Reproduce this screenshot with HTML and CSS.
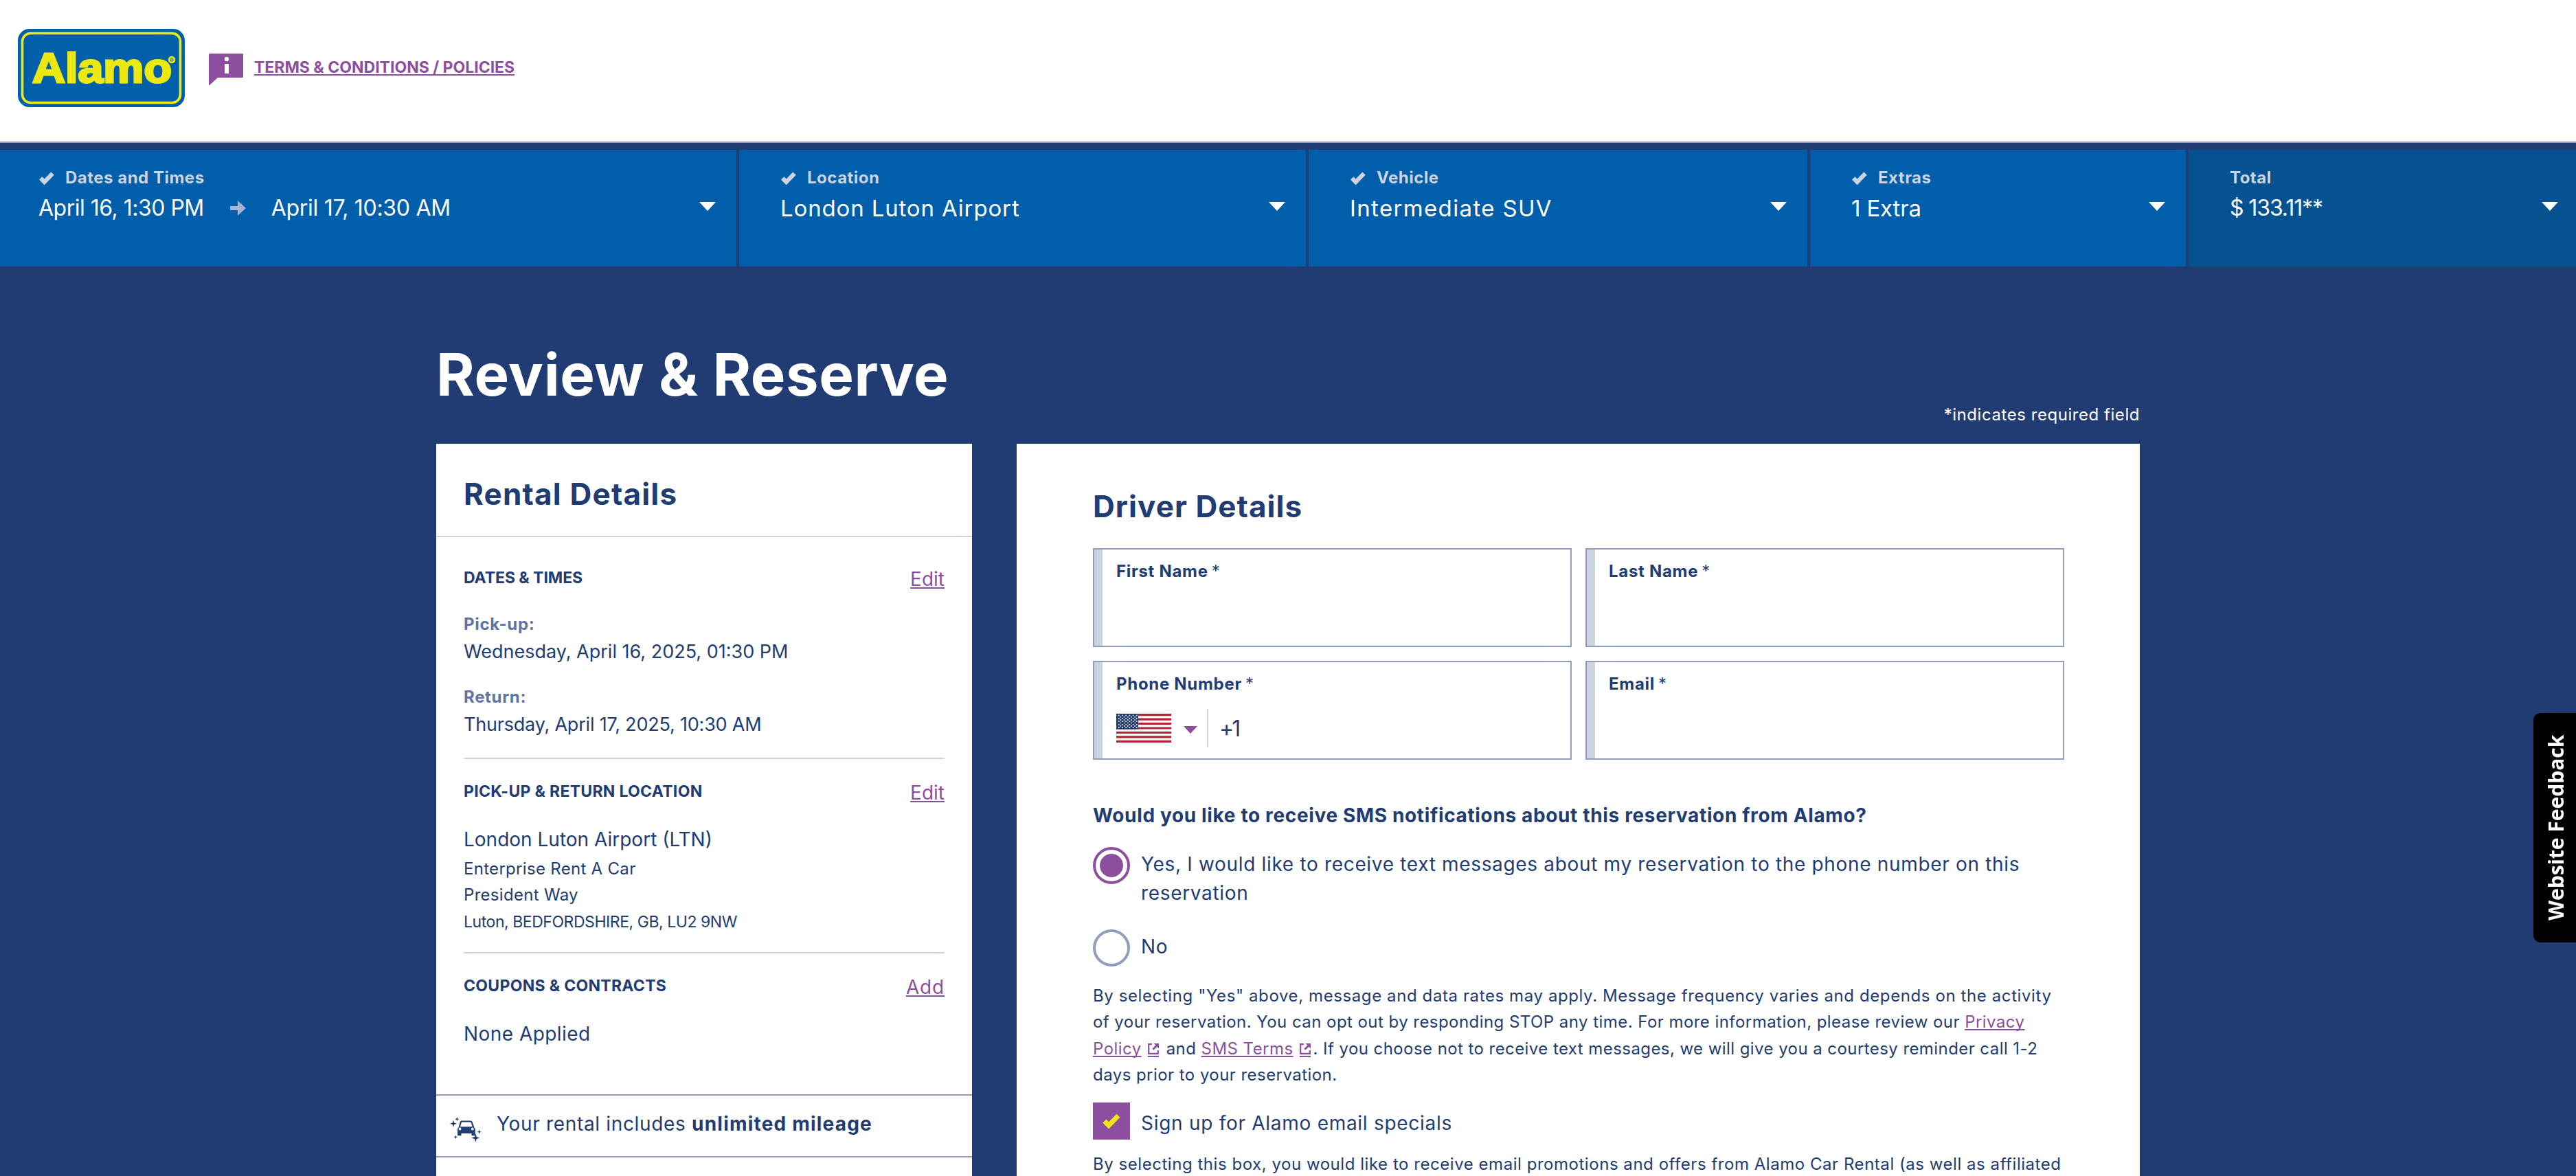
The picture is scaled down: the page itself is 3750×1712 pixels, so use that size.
FILE: index.html
```
<!DOCTYPE html>
<html lang="en">
<head>
    <meta charset="UTF-8">
    <meta name="viewport" content="width=device-width, initial-scale=1.0">
    <title>Review &amp; Reserve</title>
    <link rel="stylesheet" href="styles.css">
</head>
<body>
    <!-- Shared icons -->
    <svg class="defs" width="0" height="0">
        <symbol id="check" viewBox="0 0 24 20"><path d="M3.2 10.4l5.4 5.6L20.6 3.6" fill="none" stroke="currentColor" stroke-width="6.2" stroke-linejoin="miter"/></symbol>
        <symbol id="caret" viewBox="0 0 24 13"><path d="M0 0h24L12 13z" fill="currentColor"/></symbol>
        <symbol id="external" viewBox="0 0 16 16"><path d="M6 1.2H1.2v13.6h13.6V10" fill="none" stroke="currentColor" stroke-width="2.2"/><path d="M8.5 0H16v7.5l-2.7-2.7-5 5-2-2 5-5z" fill="currentColor"/></symbol>
    </svg>

    <header class="header">
        <svg class="logo" viewBox="0 0 243 114">
            <rect width="243" height="114" rx="17" fill="#0160a9"/>
            <rect x="6.5" y="6.5" width="230" height="101" rx="12" fill="none" stroke="#ece814" stroke-width="3.6"/>
            <text class="logo-text" x="21" y="78" textLength="203" lengthAdjust="spacingAndGlyphs">Alamo</text>
            <circle cx="224" cy="45" r="4" fill="#7ba45c" stroke="#ece814" stroke-width="2.5"/>
        </svg>
        <svg class="info-icon" viewBox="0 0 50 46">
            <path d="M1 0h48l1 1v33l-1 1H13L1 46H0V1z" fill="#8c4f9f"/>
            <circle cx="26" cy="8" r="3.2" fill="#fff"/>
            <rect x="23" y="15" width="6" height="14" fill="#fff"/>
        </svg>
        <a class="terms" href="#">TERMS &amp; CONDITIONS / POLICIES</a>
    </header>

    <!-- Reservation progress bar -->
    <nav class="steps">
        <div class="step step-dates">
            <div class="step-label"><svg class="check"><use href="#check"/></svg>Dates and Times</div>
            <div class="step-value">
                <span class="date-from">April 16, 1:30 PM</span>
                <svg class="arrow" viewBox="0 0 23 22"><path d="M0 8h11V0l12 11-12 11v-8H0z" fill="#a5b5d6"/></svg>
                <span class="date-to">April 17, 10:30 AM</span>
                <svg class="caret"><use href="#caret"/></svg>
            </div>
        </div>
        <div class="step step-location">
            <div class="step-label"><svg class="check"><use href="#check"/></svg>Location</div>
            <div class="step-value">London Luton Airport<svg class="caret"><use href="#caret"/></svg></div>
        </div>
        <div class="step step-vehicle">
            <div class="step-label"><svg class="check"><use href="#check"/></svg>Vehicle</div>
            <div class="step-value">Intermediate SUV<svg class="caret"><use href="#caret"/></svg></div>
        </div>
        <div class="step step-extras">
            <div class="step-label"><svg class="check"><use href="#check"/></svg>Extras</div>
            <div class="step-value">1 Extra<svg class="caret"><use href="#caret"/></svg></div>
        </div>
        <div class="step step-total">
            <div class="step-label">Total</div>
            <div class="step-value">$ 133.11**<svg class="caret"><use href="#caret"/></svg></div>
        </div>
    </nav>

    <main class="container">
        <div class="page-head">
            <h1>Review &amp; Reserve</h1>
            <p class="required-note">*indicates required field</p>
        </div>

        <div class="columns">
            <aside class="rental">
                <h2>Rental Details</h2>

                <section class="rental-section dates">
                    <div class="section-head">
                        <h3>DATES &amp; TIMES</h3>
                        <a href="#">Edit</a>
                    </div>
                    <p class="sub-label">Pick-up:</p>
                    <p class="date">Wednesday, April 16, 2025, 01:30 PM</p>
                    <p class="sub-label">Return:</p>
                    <p class="date date-return">Thursday, April 17, 2025, 10:30 AM</p>
                </section>

                <section class="rental-section location">
                    <div class="section-head">
                        <h3 class="wide">PICK-UP &amp; RETURN LOCATION</h3>
                        <a href="#">Edit</a>
                    </div>
                    <p class="place">London Luton Airport (LTN)</p>
                    <address>
                        <span>Enterprise Rent A Car</span><br>
                        <span>President Way</span><br>
                        <span class="city">Luton, BEDFORDSHIRE, GB, LU2 9NW</span>
                    </address>
                </section>

                <section class="rental-section coupons">
                    <div class="section-head">
                        <h3 class="wide">COUPONS &amp; CONTRACTS</h3>
                        <a class="add" href="#">Add</a>
                    </div>
                    <p class="none">None Applied</p>
                </section>

                <div class="mileage">
                    <svg class="car" viewBox="0 0 46 36" fill="#213c72">
                        <path d="M16.5 5.5h13.5q2 0 2.6 1.8l2.8 8.2q1.4.8 1.4 2.5v8.5q0 .8-.8.8h-3.6q-.9 0-.9-.9V24H16.5v2.4q0 .9-.9.9H12q-.9 0-.9-.9V18q0-1.7 1.4-2.5l2.2-8.2q.5-1.8 1.8-1.8zM17 7.5L15 14.3h17.6L30.4 7.5z" fill-rule="evenodd"/>
                        <circle cx="14.5" cy="17.5" r="1.9" fill="#fff"/>
                        <circle cx="32.8" cy="17.5" r="1.9" fill="#fff"/>
                        <path d="M5 4.5l1.2 4L10.2 9.700l-4 1.200L5 15l-1.200-4.100L-.2 9.700l4-1.200z"/>
                        <path d="M10.3 0l.8 2.4 2.4.8-2.4.8-.8 2.400-.8-2.400-2.400-.8 2.400-.8z"/>
                        <path d="M8.3 26.4l.7 2.200 2.200.7-2.200.7-.7 2.200-.7-2.200-2.200-.7 2.200-.7z"/>
                        <path d="M42.7 18.4l.8 2.500 2.500.8-2.500.8-.8 2.500-.8-2.500-2.500-.8 2.500-.8z"/>
                        <path d="M37.3 24.2l1.500 4.700 4.700 1.500-4.700 1.500-1.500 4.500-1.500-4.500-4.700-1.500 4.700-1.500z"/>
                    </svg>
                    <p>Your rental includes <strong>unlimited mileage</strong></p>
                </div>
            </aside>

            <form class="driver">
                <h2>Driver Details</h2>

                <div class="fields">
                    <div class="field">
                        <label for="firstName">First Name<span>*</span></label>
                        <input type="text" id="firstName">
                    </div>
                    <div class="field">
                        <label for="lastName">Last Name<span>*</span></label>
                        <input type="text" id="lastName">
                    </div>
                    <div class="field">
                        <label for="phone">Phone Number<span>*</span></label>
                        <div class="phone">
                            <svg class="flag" viewBox="0 0 80 42">
                                <rect width="80" height="42" fill="#fff"/>
                                <path d="M0 1.6h80M0 8.1h80M0 14.5h80M0 21h80M0 27.5h80M0 33.9h80M0 40.4h80" stroke="#b52233" stroke-width="3.2"/>
                                <rect width="32" height="22.6" fill="#213c72"/>
                                <path d="M3 2.5h28M3 6.9h28M3 11.3h28M3 15.7h28M3 20.1h28" stroke="#fff" stroke-width="1.6" stroke-dasharray="1.6 3.6"/>
                                <path d="M5.6 4.7h24M5.6 9.1h24M5.6 13.5h24M5.6 17.9h24" stroke="#fff" stroke-width="1.6" stroke-dasharray="1.6 3.6"/>
                            </svg>
                            <svg class="phone-caret"><use href="#caret"/></svg>
                            <input type="tel" id="phone" value="+1">
                        </div>
                    </div>
                    <div class="field">
                        <label for="email">Email<span>*</span></label>
                        <input type="email" id="email">
                    </div>
                </div>

                <h4>Would you like to receive SMS notifications about this reservation from Alamo?</h4>

                <div class="option">
                    <span class="radio checked"></span>
                    <p>Yes, I would like to receive text messages about my reservation to the phone number on this<br>reservation</p>
                </div>
                <div class="option option-no">
                    <span class="radio"></span>
                    <p>No</p>
                </div>

                <p class="legal">
                    <span class="first-line">By selecting "Yes" above, message and data rates may apply. Message frequency varies and depends on the activity</span><br>
                    of your reservation. You can opt out by responding STOP any time. For more information, please review our <a href="#">Privacy</a><br>
                    <a href="#">Policy</a><svg class="external"><use href="#external"/></svg><span class="and">and</span> <a href="#">SMS Terms</a><svg class="external"><use href="#external"/></svg><span class="rest">. If you choose not to receive text messages, we will give you a courtesy reminder call 1-2</span><br>
                    days prior to your reservation.
                </p>

                <div class="option option-email">
                    <span class="checkbox"><svg class="tick"><use href="#check"/></svg></span>
                    <p>Sign up for Alamo email specials</p>
                </div>
                <p class="legal legal-email">By selecting this box, you would like to receive email promotions and offers from Alamo Car Rental (as well as affiliated</p>
            </form>
        </div>
    </main>

    <button class="feedback" type="button">Website Feedback</button>
</body>
</html>
```
FILE: styles.css
```
* {
    box-sizing: border-box;
}

body {
    margin: 0;
    height: 1712px;
    overflow: hidden;
    background-color: #213c72;
    color: #213c72;
    font-family: Inter, "Open Sans", sans-serif;
    font-size: 28px;
    line-height: 42px;
    letter-spacing: 0.67px;
    white-space: nowrap;
}

h1, h2, h3, h4, p {
    margin: 0;
}

svg {
    display: block;
    flex-shrink: 0;
}

.defs {
    position: absolute;
}

a {
    color: #8c4f9f;
    text-decoration: underline;
    text-decoration-thickness: 2px;
    text-underline-offset: 2px;
    text-decoration-skip-ink: none;
}

/* Header */
.header {
    display: flex;
    align-items: flex-start;
    height: 208px;
    padding-left: 26px;
    background-color: #fff;
    border-bottom: 2px solid #929dbb;
}

.logo {
    width: 243px;
    height: 114px;
    margin-top: 42px;
}

.logo-text {
    font-family: "Liberation Sans", Arial, sans-serif;
    font-size: 62px;
    font-weight: bold;
    letter-spacing: 0;
    fill: #ece814;
    stroke: #ece814;
    stroke-width: 3px;
}

.info-icon {
    width: 50px;
    height: 46px;
    margin: 78px 16px 0 35px;
}

.terms {
    margin-top: 80px;
    font-size: 23px;
    font-weight: 700;
    line-height: 36px;
    letter-spacing: 0;
}

/* Steps bar */
.steps {
    display: flex;
    gap: 4px;
    height: 170px;
    margin-top: 10px;
}

.step {
    padding: 23px 30px 0 60px;
    background-color: #005eaa;
    color: #fff;
}

.step-dates {
    width: 1072px;
    padding-left: 56px;
}

.step-location {
    width: 825px;
}

.step-vehicle {
    width: 726px;
}

.step-extras {
    width: 547px;
}

.step-total {
    flex: 1;
    padding-right: 26px;
    background-color: #065290;
}

.step-label {
    display: flex;
    align-items: center;
    height: 36px;
    color: #ccd4e2;
    font-size: 24px;
    font-weight: 700;
    letter-spacing: 0.5px;
}

.check {
    width: 24px;
    height: 20px;
    margin-right: 15px;
}

.step-value {
    display: flex;
    align-items: center;
    height: 48px;
    margin-top: 2px;
    font-size: 33px;
    letter-spacing: 0.85px;
}

.caret {
    width: 24px;
    height: 13px;
    margin: -6px 0 0 auto;
}

.arrow {
    width: 23px;
    height: 22px;
    margin: 0 37px 0 38px;
}

.date-from {
    font-size: 32px;
    letter-spacing: -0.5px;
}

.date-to {
    font-size: 32px;
    letter-spacing: -0.3px;
}

.step-vehicle .step-value {
    letter-spacing: 1.35px;
}

.step-extras .step-value {
    letter-spacing: -0.15px;
}

.step-total .step-value {
    font-size: 32px;
    letter-spacing: -1.1px;
}

/* Page */
.container {
    width: 2480px;
    margin: 108px auto 0;
}

.page-head {
    display: flex;
    justify-content: space-between;
    height: 150px;
}

h1 {
    color: #fff;
    font-size: 85px;
    line-height: 100px;
    letter-spacing: 0.6px;
}

.required-note {
    align-self: flex-end;
    margin-bottom: 23px;
    color: #fff;
    font-size: 24px;
    line-height: 38px;
    letter-spacing: 0.55px;
}

.columns {
    display: flex;
    gap: 65px;
    height: 1066px;
    overflow: hidden;
}

/* Rental details */
.rental {
    width: 780px;
    background-color: #fff;
}

.rental h2 {
    height: 136px;
    padding: 43px 40px 0;
    border-bottom: 2px solid #ccd4e2;
    font-size: 44px;
    line-height: 60px;
    letter-spacing: 1.2px;
}

.rental-section {
    margin: 0 40px;
    padding: 28px 0;
    border-bottom: 2px solid #ccd4e2;
}

.dates {
    padding: 40px 0 27px;
}

.location {
    padding-bottom: 25px;
}

.coupons {
    padding-bottom: 67px;
    border-bottom: none;
}

.section-head {
    display: flex;
    justify-content: space-between;
    align-items: flex-start;
    margin-bottom: 26px;
}

.section-head a {
    letter-spacing: 0;
}

.section-head .add {
    letter-spacing: 0.8px;
}

h3 {
    margin-top: 1px;
    font-size: 23px;
    line-height: 36px;
    letter-spacing: -0.05px;
}

h3.wide {
    letter-spacing: 0.3px;
}

.sub-label {
    color: #5f74a0;
    font-size: 24px;
    font-weight: 700;
    line-height: 38px;
}

.date {
    margin-bottom: 26px;
    font-size: 27px;
    letter-spacing: 0;
}

.date-return {
    margin-bottom: 0;
    letter-spacing: -0.2px;
}

.place {
    margin-bottom: 3px;
    letter-spacing: 0;
}

address {
    font-size: 24px;
    font-style: normal;
    line-height: 38.4px;
    letter-spacing: 0.3px;
}

address .city {
    font-size: 23px;
    letter-spacing: -0.45px;
}

.none {
    letter-spacing: 0.45px;
}

.mileage {
    display: flex;
    height: 92px;
    padding: 20px 20px 0;
    border-top: 2px solid #929dbb;
    border-bottom: 2px solid #929dbb;
}

.mileage strong {
    letter-spacing: 1.2px;
}

.car {
    width: 46px;
    height: 36px;
    margin: 11px 22px 0 0;
    overflow: visible;
}

/* Driver details */
.driver {
    width: 1635px;
    padding: 61px 110px 0 111px;
    background-color: #fff;
}

.driver h2 {
    margin-bottom: 31px;
    font-size: 44px;
    line-height: 60px;
    letter-spacing: 1.05px;
}

.fields {
    display: grid;
    grid-template-columns: 1fr 1fr;
    gap: 20px;
}

.field {
    height: 144px;
    padding: 14px 20px 0 32px;
    border: 2px solid #929dbb;
    box-shadow: inset 12px 0 #ccd4e2;
}

.field label {
    display: block;
    font-size: 24px;
    font-weight: 700;
    line-height: 36px;
    letter-spacing: 0.7px;
}

.field label span {
    margin-left: 5px;
    font-weight: 400;
}

.field input {
    width: 100%;
    height: 56px;
    padding: 0;
    border: none;
    outline: none;
    background: none;
    color: #213c72;
    font-family: inherit;
    font-size: 32px;
}

.phone {
    display: flex;
    align-items: center;
    height: 56px;
    margin-top: 18px;
}

.flag {
    width: 80px;
    height: 42px;
}

.phone-caret {
    width: 20px;
    height: 11px;
    margin: 4px 14px 0 18px;
    color: #8c4f9f;
}

.field .phone input {
    flex: 1;
    padding-left: 16px;
    border-left: 2px solid #ccd4e2;
    letter-spacing: -3px;
}

h4 {
    margin: 60px 0 25px;
    font-size: 28px;
    letter-spacing: 0.64px;
}

.option {
    display: flex;
    align-items: flex-start;
    gap: 16px;
}

.option p {
    margin-top: 4px;
}

.option-no {
    margin: 32px 0 24px;
}

.option-email {
    margin: 20px 0 17px;
}

.option-email p {
    margin-top: 9px;
    letter-spacing: 0.72px;
}

.radio {
    width: 54px;
    height: 54px;
    border: 4px solid #929dbb;
    border-radius: 50%;
}

.radio.checked {
    padding: 6px;
    border-color: #8c4f9f;
    background: #8c4f9f content-box;
}

.checkbox {
    display: flex;
    align-items: center;
    justify-content: center;
    width: 54px;
    height: 54px;
    background-color: #8c4f9f;
    color: #ece814;
}

.tick {
    width: 28px;
    height: 23px;
}

.legal {
    font-size: 24px;
    line-height: 38.4px;
    letter-spacing: 0.45px;
}

.legal .first-line {
    letter-spacing: 0.6px;
}

.legal .rest {
    letter-spacing: 0.43px;
}

.legal-email {
    letter-spacing: 0.54px;
}

.external {
    display: inline-block;
    width: 16px;
    height: 20px;
    margin: 0 4px 0 9px;
    padding-bottom: 2px;
    border-bottom: 2px solid #8c4f9f;
    color: #8c4f9f;
    vertical-align: -4px;
}

.and {
    margin-left: 7px;
}

/* Feedback tab on the right edge */
.feedback {
    position: fixed;
    top: 1038px;
    right: 0;
    width: 62px;
    height: 334px;
    padding: 0 3px 0 0;
    border: none;
    border-radius: 0 10px 10px 0;
    background-color: #000;
    color: #fff;
    font-family: "Open Sans", sans-serif;
    font-size: 30px;
    font-weight: 700;
    letter-spacing: 0;
    writing-mode: vertical-rl;
    transform: rotate(180deg);
}
```
